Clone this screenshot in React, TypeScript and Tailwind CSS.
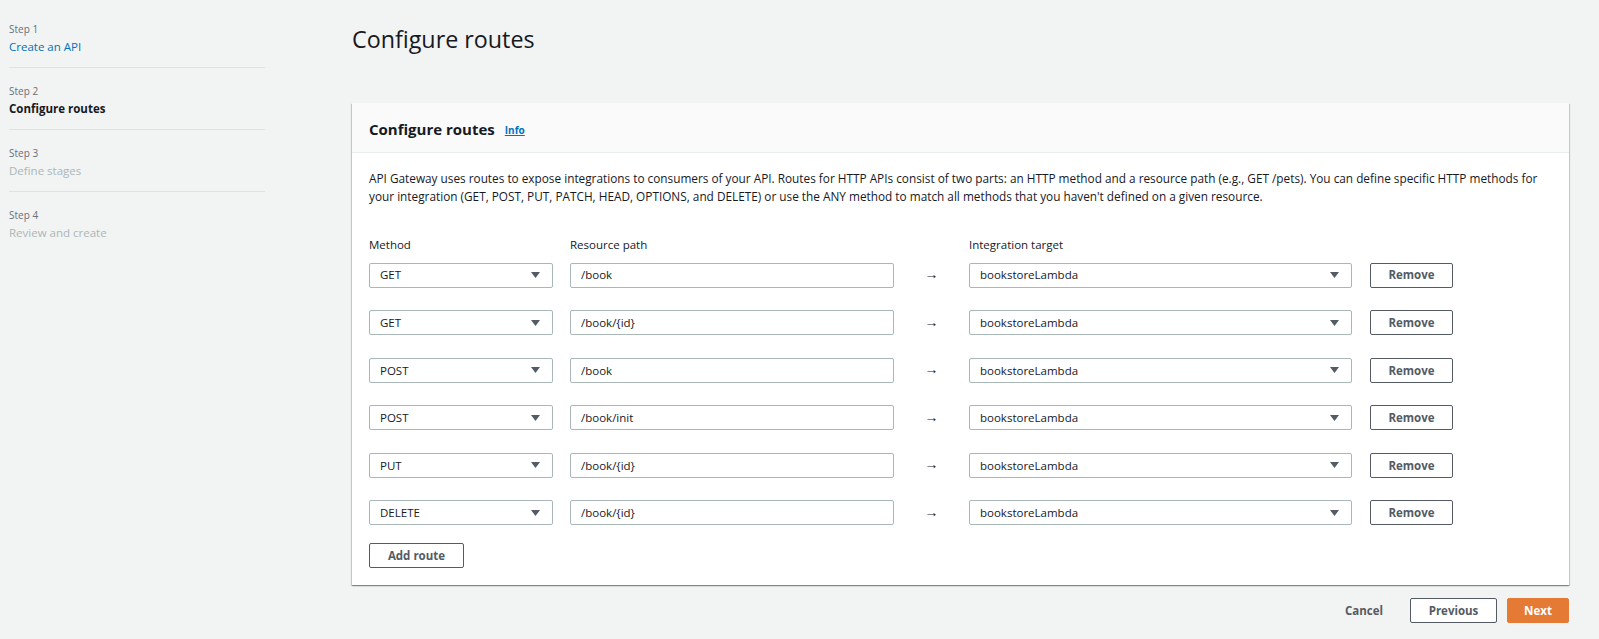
const steps = [
  { label: "Step 1", title: "Create an API", state: "done" },
  { label: "Step 2", title: "Configure routes", state: "current" },
  { label: "Step 3", title: "Define stages", state: "todo" },
  { label: "Step 4", title: "Review and create", state: "todo" },
];

const routes = [
  { method: "GET", path: "/book" },
  { method: "GET", path: "/book/{id}" },
  { method: "POST", path: "/book" },
  { method: "POST", path: "/book/init" },
  { method: "PUT", path: "/book/{id}" },
  { method: "DELETE", path: "/book/{id}" },
];

function Caret() {
  return (
    <svg width="9" height="6" viewBox="0 0 9 6" className="shrink-0">
      <path d="M0 0 H9 L4.5 6 Z" fill="#545b64" />
    </svg>
  );
}

function SelectBox({ value, width }: { value: string; width: string }) {
  return (
    <div
      className={`${width} h-[25px] flex items-center justify-between pl-[10px] pr-[12px] bg-white border border-[#aab7b8] rounded-[2px] text-[11.5px] text-[#16191f]`}
    >
      <span>{value}</span>
      <Caret />
    </div>
  );
}

export default function App() {
  return (
    <div
      className="min-h-[639px] w-full bg-[#f2f3f3] flex text-[#16191f]"
      style={{ fontFamily: '"Open Sans", "Noto Sans", sans-serif' }}
    >
      {/* wizard steps */}
      <nav className="w-[352px] shrink-0 pl-[9px] pt-[6px]">
        <ul className="w-[256px]">
          {steps.map((s, i) => (
            <li
              key={s.label}
              className={`pt-[16px] pb-[11px] ${i < steps.length - 1 ? "border-b border-[#dfe2e2]" : ""}`}
            >
              <div className="text-[10px] leading-[15px] text-[#687078]">{s.label}</div>
              <div
                className={`mt-[1px] text-[11.5px] leading-[18px] ${
                  s.state === "done"
                    ? "text-[#0073bb]"
                    : s.state === "current"
                    ? "font-bold text-[#16191f]"
                    : "text-[#aab7b8]"
                }`}
              >
                {s.title}
              </div>
            </li>
          ))}
        </ul>
      </nav>

      <main className="flex-1 pr-[30px] pt-[24px]">
        <h1 className="text-[23.3px] leading-[30px] text-[#16191f]">Configure routes</h1>

        <section className="mt-[49px] bg-white shadow-[0_1px_1px_0_rgba(0,28,36,0.3),1px_1px_1px_0_rgba(0,28,36,0.15),-1px_1px_1px_0_rgba(0,28,36,0.15)]">
          <header className="h-[50px] flex items-center pl-[17px] pt-[3px] bg-[#fafafa] border-b border-[#eaeded]">
            <h2 className="text-[15px] font-bold">Configure routes</h2>
            <a className="ml-[10px] mt-[2px] text-[10px] font-bold text-[#0073bb] underline">Info</a>
          </header>

          <div className="px-[17px] pt-[17px] pb-[17px]">
            <p className="text-[11.8px] leading-[17.5px]">
              API Gateway uses routes to expose integrations to consumers of your API. Routes for HTTP APIs consist of two
              parts: an HTTP method and a resource path (e.g., GET /pets). You can define specific HTTP methods for your
              integration (GET, POST, PUT, PATCH, HEAD, OPTIONS, and DELETE) or use the ANY method to match all methods
              that you haven't defined on a given resource.
            </p>

            <div className="mt-[31px] flex text-[11.5px] leading-[17.5px]">
              <div className="w-[184px]">Method</div>
              <div className="ml-[17px] w-[324px]">Resource path</div>
              <div className="w-[75px]" />
              <div className="w-[383px]">Integration target</div>
            </div>

            <div className="mt-[9px] flex flex-col gap-[22.6px]">
              {routes.map((r, i) => (
                <div key={i} className="flex items-center">
                  <SelectBox value={r.method} width="w-[184px]" />
                  <div className="ml-[17px] w-[324px] h-[25px] flex items-center pl-[10px] bg-white border border-[#aab7b8] rounded-[2px] text-[11.5px]">
                    {r.path}
                  </div>
                  <div className="w-[75px] flex justify-center text-[14px] leading-none -mt-[2px] text-[#16191f]">→</div>
                  <SelectBox value="bookstoreLambda" width="w-[383px]" />
                  <button className="ml-[18px] w-[83px] h-[25px] border border-[#545b64] rounded-[2px] bg-white text-[11.5px] font-bold text-[#545b64]">
                    Remove
                  </button>
                </div>
              ))}
            </div>

            <button className="mt-[18px] w-[95px] h-[25px] border border-[#545b64] rounded-[2px] bg-white text-[11.5px] font-bold text-[#545b64]">
              Add route
            </button>
          </div>
        </section>

        <div className="mt-[13px] flex justify-end items-center gap-[10px]">
          <button className="h-[25px] px-[17px] text-[11.5px] font-bold text-[#545b64]">Cancel</button>
          <button className="w-[87px] h-[25px] border border-[#545b64] rounded-[2px] bg-white text-[11.5px] font-bold text-[#545b64]">
            Previous
          </button>
          <button className="w-[62px] h-[25px] rounded-[2px] bg-[#e47a34] border border-[#e47a34] text-[11.5px] font-bold text-white">
            Next
          </button>
        </div>
      </main>
    </div>
  );
}
